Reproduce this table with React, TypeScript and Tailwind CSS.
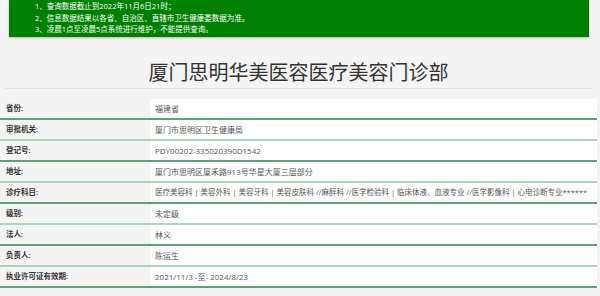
import React from "react";

const rows: { label: string; value: string; small?: boolean }[] = [
  { label: "省份:", value: "福建省" },
  { label: "审批机关:", value: "厦门市思明区卫生健康局" },
  { label: "登记号:", value: "PDY00202-335020390D1542" },
  { label: "地址:", value: "厦门市思明区厦禾路913号华星大厦三层部分" },
  {
    label: "诊疗科目:",
    value:
      "医疗美容科 | 美容外科 | 美容牙科 | 美容皮肤科 //麻醉科 //医学检验科 | 临床体液、血液专业 //医学影像科 | 心电诊断专业******",
    small: true,
  },
  { label: "级别:", value: "未定级" },
  { label: "法人:", value: "林义" },
  { label: "负责人:", value: "陈运生" },
  { label: "执业许可证有效期:", value: "2021/11/3 -至- 2024/8/23" },
];

const notices = [
  "1、查询数据截止到2022年11月6日21时；",
  "2、信息数据结果以各省、自治区、直辖市卫生健康委数据为准。",
  "3、凌晨1点至凌晨5点系统进行维护，不能提供查询。",
];

export default function App() {
  return (
    <div
      className="w-[600px] h-[296px] overflow-hidden bg-[#f4f4f4]"
      style={{ fontFamily: '"Open Sans", "Noto Sans CJK SC", sans-serif' }}
    >
      {/* notice banner */}
      <div className="ml-[9px] w-[580px] h-[37px] bg-[#008000] pl-[26px] pt-[1px] text-white text-[7.5px] leading-[11.5px] shadow-[0_1px_2px_rgba(0,0,0,0.25)]">
        {notices.map((n) => (
          <div key={n}>{n}</div>
        ))}
      </div>

      <div className="w-[597px]">
        <h1 className="mt-[24px] text-center text-[20px] leading-[24px] text-[#333]">
          厦门思明华美医容医疗美容门诊部
        </h1>
        <div className="mx-[5px] mt-[3px] border-b border-[#e3e3e3]"></div>

        {/* info table */}
        <div className="mt-[10px]">
          {rows.map((r, i) => (
            <div
              key={r.label}
              className={`grid grid-cols-[150px_447px] h-[21px] border-b-2 ${
                i % 2 === 0 ? "border-[#5f9f7a]" : "border-[#a9d5b9]"
              }`}
            >
              <div className="pl-[6px] flex items-center text-[7.5px] font-semibold text-[#333]">
                {r.label}
              </div>
              <div
                className={`bg-white pl-[5px] flex items-center text-[#555] whitespace-nowrap overflow-hidden ${
                  r.small ? "text-[7.5px]" : "text-[8px]"
                }`}
              >
                {r.value}
              </div>
            </div>
          ))}
        </div>
      </div>
    </div>
  );
}
